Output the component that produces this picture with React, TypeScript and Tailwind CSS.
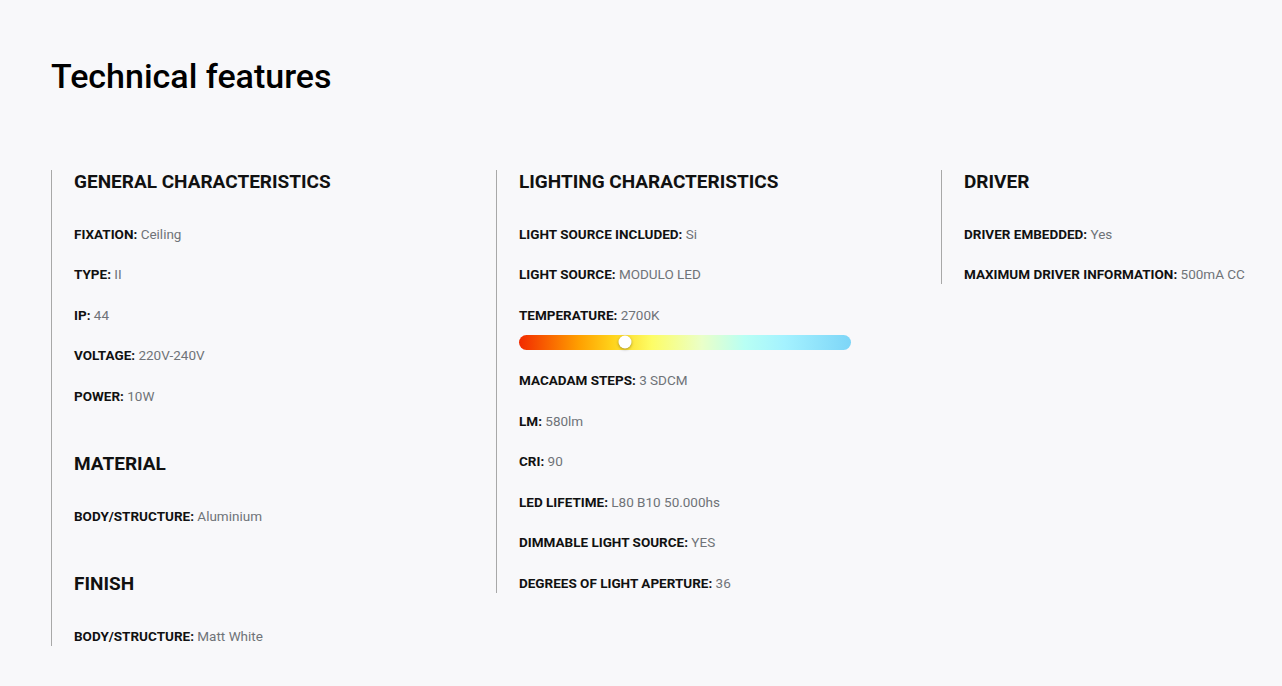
import React from "react";

type Feature = { label: string; value: string; bar?: number };
type Section = { title: string; items: Feature[] };

const columns: Section[][] = [
  [
    {
      title: "GENERAL CHARACTERISTICS",
      items: [
        { label: "FIXATION", value: "Ceiling" },
        { label: "TYPE", value: "II" },
        { label: "IP", value: "44" },
        { label: "VOLTAGE", value: "220V-240V" },
        { label: "POWER", value: "10W" },
      ],
    },
    {
      title: "MATERIAL",
      items: [{ label: "BODY/STRUCTURE", value: "Aluminium" }],
    },
    {
      title: "FINISH",
      items: [{ label: "BODY/STRUCTURE", value: "Matt White" }],
    },
  ],
  [
    {
      title: "LIGHTING CHARACTERISTICS",
      items: [
        { label: "LIGHT SOURCE INCLUDED", value: "Si" },
        { label: "LIGHT SOURCE", value: "MODULO LED" },
        { label: "TEMPERATURE", value: "2700K", bar: 32 },
        { label: "MACADAM STEPS", value: "3 SDCM" },
        { label: "LM", value: "580lm" },
        { label: "CRI", value: "90" },
        { label: "LED LIFETIME", value: "L80 B10 50.000hs" },
        { label: "DIMMABLE LIGHT SOURCE", value: "YES" },
        { label: "DEGREES OF LIGHT APERTURE", value: "36" },
      ],
    },
  ],
  [
    {
      title: "DRIVER",
      items: [
        { label: "DRIVER EMBEDDED", value: "Yes" },
        { label: "MAXIMUM DRIVER INFORMATION", value: "500mA CC" },
      ],
    },
  ],
];

function TemperatureBar({ position }: { position: number }) {
  return (
    <div className="relative mt-[10px] h-[15px] w-[332px] rounded-full bg-[linear-gradient(90deg,#f22a00_0%,#ff9f00_18%,#ffd21a_28%,#fdfd66_40%,#eaffc8_55%,#b8fff4_68%,#a4f2ff_80%,#7dd5f7_100%)]">
      <span
        className="absolute top-1/2 h-[13px] w-[13px] -translate-x-1/2 -translate-y-1/2 rounded-full bg-white shadow-[0_1px_3px_rgba(0,0,0,0.35)]"
        style={{ left: `${position}%` }}
      />
    </div>
  );
}

function FeatureRow({ item }: { item: Feature }) {
  return (
    <li className="mb-[21.5px] last:mb-0">
      <p className="whitespace-nowrap text-[13.5px] leading-[19px]">
        <span className="font-bold text-[#111]">{item.label}:</span>{" "}
        <span className="text-[#6f7378]">{item.value}</span>
      </p>
      {item.bar !== undefined && <TemperatureBar position={item.bar} />}
    </li>
  );
}

export default function App() {
  return (
    <div className="min-h-[686px] overflow-hidden bg-[#f8f8fa] px-[51px] pt-[56px] font-['Roboto',sans-serif] text-[#111]">
      <h1 className="text-[34px] font-medium leading-[40px] text-black">Technical features</h1>

      <div className="mt-[74px] grid grid-cols-[445px_445px_445px]">
        {columns.map((sections, ci) => (
          <div key={ci} className="self-start border-l border-[#a8a8a8] pl-[22px]">
            {sections.map((section, si) => (
              <div key={si} className="mb-[46.5px] last:mb-0">
                <h2 className="text-[19px] font-bold leading-[24px] text-[#111]">
                  {section.title}
                </h2>
                <ul className="mt-[30.5px]">
                  {section.items.map((item, ii) => (
                    <FeatureRow key={ii} item={item} />
                  ))}
                </ul>
              </div>
            ))}
          </div>
        ))}
      </div>
    </div>
  );
}
